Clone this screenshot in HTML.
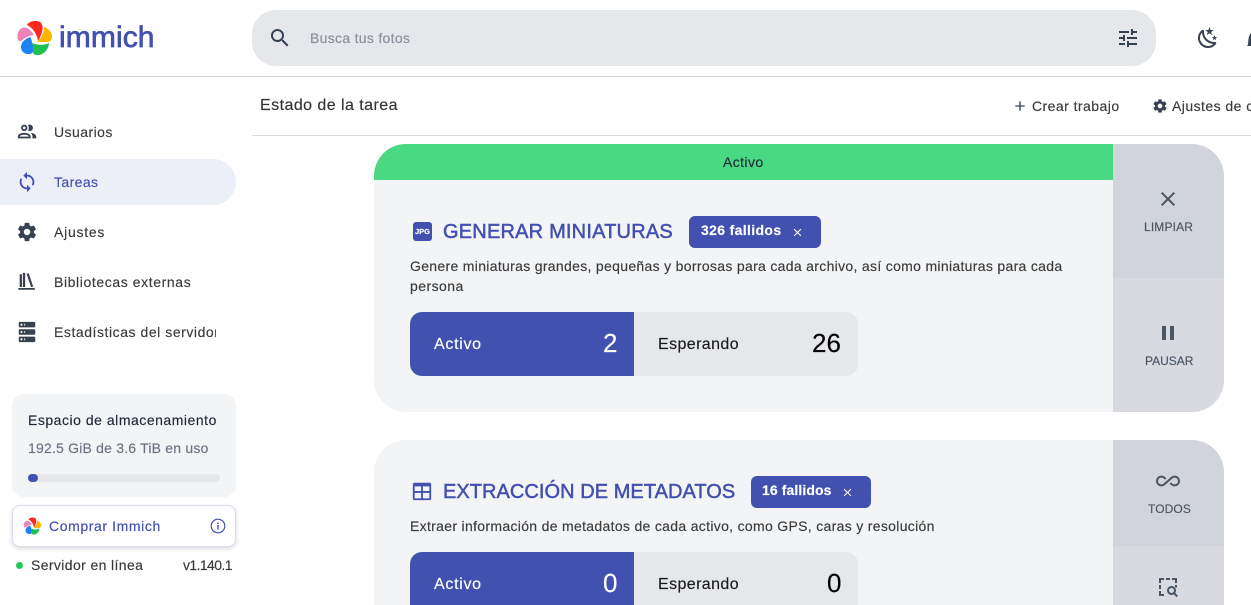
<!DOCTYPE html>
<html lang="es"><head><meta charset="utf-8"><title>Immich</title>
<style>
html,body{margin:0;padding:0;width:1251px;height:605px;overflow:hidden;background:#fff;font-family:"Liberation Sans",sans-serif;color:#3a3a3a}
#r{position:relative;width:1251px;height:605px;overflow:hidden;background:#fff}
.a{position:absolute}
.t{position:absolute;white-space:nowrap;line-height:20px;font-size:14px;-webkit-text-stroke:.15px currentColor}
svg{position:absolute;display:block}
</style></head><body><div id="r">
<!-- header -->
<svg style="left:16px;top:20px" width="36" height="36" viewBox="0 0 36 36">
<path d="M11 5C13 1 20 0 24 2C27 4 27 8 26 12C25 15 24 18 22 21C21 14 17 8 11 5Z" fill="#fa2921"/>
<path d="M28 7C32 8 36 12 36 17C36 20 34 22 31 22L21 22C25 19 28 13 28 7Z" fill="#ffb400"/>
<path d="M33 23C33 28 29 34 23 35C20 35.500 17 34.500 17 32L16 23C22 25.500 28 25.500 33 23Z" fill="#1ec050"/>
<path d="M14.500 17C8 19 5 23 5 27C5 31 8 34 12 34C14 34 17 34 17 31C17 26 16 21 14.500 17Z" fill="#1e83f7"/>
<path d="M1.500 17C1 12 4 8 8 7.500C12 7 16 12 18 15C13 15.500 9 18 5 21C3 21.500 1.500 20 1.500 17Z" fill="#ee83b8"/>
</svg>
<div class="t" style="left:59px;top:19px;font-size:30px;line-height:38px;color:#4250af;letter-spacing:.1px;-webkit-text-stroke:.7px #4250af">immich</div>
<div class="a" style="left:0;top:76px;width:1251px;height:1px;background:#d4d4de"></div>
<div class="a" style="left:252px;top:10px;width:904px;height:56px;border-radius:24px;background:#e5e7eb"></div>
<svg style="left:268px;top:26px" width="24" height="24" viewBox="0 0 24 24"><path fill="#374151" d="M9.5,3A6.5,6.5 0 0,1 16,9.5C16,11.11 15.41,12.59 14.44,13.73L14.71,14H15.5L20.5,19L19,20.5L14,15.5V14.71L13.73,14.44C12.59,15.41 11.11,16 9.5,16A6.5,6.5 0 0,1 3,9.5A6.5,6.5 0 0,1 9.5,3M9.5,5C7,5 5,7 5,9.5C5,12 7,14 9.5,14C12,14 14,12 14,9.5C14,7 12,5 9.5,5Z"/></svg>
<div class="t" style="left:310px;top:28px;color:#8a8f99;letter-spacing:.3px">Busca tus fotos</div>
<svg style="left:1116px;top:26px" width="24" height="24" viewBox="0 0 24 24"><path fill="#374151" d="M3,17V19H9V17H3M3,5V7H13V5H3M13,21V19H21V17H13V15H11V21H13M7,9V11H3V13H7V15H9V9H7M21,13V11H11V13H21M15,9H17V7H21V5H17V3H15V9Z"/></svg>
<svg style="left:1196px;top:26px" width="24" height="24" viewBox="0 0 24 24"><path fill="#374151" d="M17.75,4.09L15.22,6.03L16.13,9.09L13.5,7.28L10.87,9.09L11.78,6.03L9.25,4.09L12.44,4L13.5,1L14.56,4L17.75,4.09M21.25,11L19.61,12.25L20.2,14.23L18.5,13.06L16.8,14.23L17.39,12.25L15.75,11L17.81,10.95L18.5,9L19.19,10.95L21.25,11M18.97,15.95C19.8,15.87 20.69,17.05 20.16,17.8C19.84,18.25 19.5,18.67 19.08,19.07C15.17,23 8.84,23 4.94,19.07C1.03,15.17 1.03,8.83 4.94,4.93C5.34,4.53 5.76,4.17 6.21,3.85C6.96,3.32 8.14,4.21 8.06,5.04C7.79,7.9 8.75,10.87 10.95,13.06C13.14,15.26 16.1,16.22 18.97,15.95M17.33,17.97C14.5,17.81 11.7,16.64 9.53,14.5C7.36,12.31 6.2,9.5 6.04,6.68C3.23,9.82 3.34,14.64 6.35,17.66C9.37,20.67 14.19,20.78 17.33,17.97Z"/></svg>
<svg style="left:1247px;top:32px" width="4" height="14" viewBox="0 0 4 14"><path fill="#374151" d="M0 14L1 12.500L1.500 7Q2 3 4 1V14Z"/></svg>

<!-- sidebar -->
<div class="a" style="left:0;top:159px;width:236px;height:46px;background:#eceef8;border-radius:0 23px 23px 0"></div>
<svg style="left:16px;top:121px" width="22" height="22" viewBox="0 0 24 24"><path fill="#374151" d="M13.07 10.41A5 5 0 0 0 13.07 4.59A3.39 3.39 0 0 1 15 4A3.5 3.5 0 0 1 15 11A3.39 3.39 0 0 1 13.07 10.41M5.5 7.5A3.5 3.5 0 1 1 9 11A3.5 3.5 0 0 1 5.5 7.5M7.5 7.5A1.5 1.5 0 1 0 9 6A1.5 1.5 0 0 0 7.5 7.5M16 17V19H2V17S2 13 9 13 16 17 16 17M14 17C13.86 16.22 12.67 15 9 15S4.07 16.29 4 17M15.95 13A5.32 5.32 0 0 1 18 17V19H22V17S22 13.37 15.94 13Z"/></svg>
<svg style="left:16px;top:171px" width="22" height="22" viewBox="0 0 24 24"><path fill="#4250af" d="M12,18A6,6 0 0,1 6,12C6,11 6.25,10.03 6.7,9.2L5.24,7.74C4.46,8.97 4,10.43 4,12A8,8 0 0,0 12,20V23L16,19L12,15M12,4V1L8,5L12,9V6A6,6 0 0,1 18,12C18,13 17.75,13.97 17.3,14.8L18.76,16.26C19.54,15.03 20,13.57 20,12A8,8 0 0,0 12,4Z"/></svg>
<svg style="left:16px;top:221px" width="22" height="22" viewBox="0 0 24 24"><path fill="#374151" d="M12,15.5A3.5,3.5 0 0,1 8.5,12A3.5,3.5 0 0,1 12,8.5A3.5,3.5 0 0,1 15.5,12A3.5,3.5 0 0,1 12,15.5M19.43,12.97C19.47,12.65 19.5,12.33 19.5,12C19.5,11.67 19.47,11.34 19.43,11L21.54,9.37C21.73,9.22 21.78,8.95 21.66,8.73L19.66,5.27C19.54,5.05 19.27,4.96 19.05,5.05L16.56,6.05C16.04,5.66 15.5,5.32 14.87,5.07L14.5,2.42C14.46,2.18 14.25,2 14,2H10C9.75,2 9.54,2.18 9.5,2.42L9.13,5.07C8.5,5.32 7.96,5.66 7.44,6.05L4.95,5.05C4.73,4.96 4.46,5.05 4.34,5.27L2.34,8.73C2.21,8.95 2.27,9.22 2.46,9.37L4.57,11C4.53,11.34 4.5,11.67 4.5,12C4.5,12.33 4.53,12.65 4.57,12.97L2.46,14.63C2.27,14.78 2.21,15.05 2.34,15.27L4.34,18.73C4.46,18.95 4.73,19.03 4.95,18.95L7.44,17.94C7.96,18.34 8.5,18.68 9.13,18.93L9.5,21.58C9.54,21.82 9.75,22 10,22H14C14.25,22 14.46,21.82 14.5,21.58L14.87,18.93C15.5,18.67 16.04,18.34 16.56,17.94L19.05,18.95C19.27,19.03 19.54,18.95 19.66,18.73L21.66,15.27C21.78,15.05 21.73,14.78 21.54,14.63L19.43,12.97Z"/></svg>
<svg style="left:16px;top:271px" width="22" height="22" viewBox="0 0 24 24"><path fill="#374151" d="M4 3.500H6.500V17.500H4ZM7.500 2H10V17.500H7.500ZM11.500 3.200L13.800 2.500L18.800 17L16.400 17.500ZM2.500 18.500H20.500V20.500H2.500Z"/></svg>
<svg style="left:16px;top:321px" width="22" height="22" viewBox="0 0 24 24"><path fill="#374151" d="M4,1H20A1,1 0 0,1 21,2V6A1,1 0 0,1 20,7H4A1,1 0 0,1 3,6V2A1,1 0 0,1 4,1M4,9H20A1,1 0 0,1 21,10V14A1,1 0 0,1 20,15H4A1,1 0 0,1 3,14V10A1,1 0 0,1 4,9M4,17H20A1,1 0 0,1 21,18V22A1,1 0 0,1 20,23H4A1,1 0 0,1 3,22V18A1,1 0 0,1 4,17M9,5H10V3H9V5M9,13H10V11H9V13M9,21H10V19H9V21M5,3V5H7V3H5M5,11V13H7V11H5M5,19V21H7V19H5Z"/></svg>
<div class="t" style="left:54px;top:122px;letter-spacing:.45px">Usuarios</div>
<div class="t" style="left:54px;top:172px;color:#4250af;letter-spacing:.4px">Tareas</div>
<div class="t" style="left:54px;top:222px;letter-spacing:.75px">Ajustes</div>
<div class="t" style="left:54px;top:272px;letter-spacing:.6px">Bibliotecas externas</div>
<div class="a" style="left:54px;top:322px;width:162px;height:20px;overflow:hidden"><div class="t" style="left:0;top:0;letter-spacing:.55px">Estadísticas del servidor</div></div>

<div class="a" style="left:12px;top:394px;width:224px;height:103px;border-radius:12px;background:#f3f4f6"></div>
<div class="t" style="left:28px;top:410px;color:#1f2937;letter-spacing:.52px">Espacio de almacenamiento</div>
<div class="t" style="left:28px;top:438px;color:#6b7280;letter-spacing:.2px">192.5 GiB de 3.6 TiB en uso</div>
<div class="a" style="left:28px;top:474px;width:192px;height:7.500px;border-radius:4px;background:#e5e7eb"></div>
<div class="a" style="left:28px;top:474px;width:10px;height:7.500px;border-radius:4px;background:#4250af"></div>
<div class="a" style="left:12px;top:505px;width:222px;height:40px;border:1px solid #d9dbf0;border-radius:8px;background:#fff;box-shadow:0 2px 4px rgba(60,60,90,.18)"></div>
<svg style="left:23px;top:517px" width="18" height="18" viewBox="0 0 36 36">
<path d="M11 5C13 1 20 0 24 2C27 4 27 8 26 12C25 15 24 18 22 21C21 14 17 8 11 5Z" fill="#fa2921"/>
<path d="M28 7C32 8 36 12 36 17C36 20 34 22 31 22L21 22C25 19 28 13 28 7Z" fill="#ffb400"/>
<path d="M33 23C33 28 29 34 23 35C20 35.500 17 34.500 17 32L16 23C22 25.500 28 25.500 33 23Z" fill="#1ec050"/>
<path d="M14.500 17C8 19 5 23 5 27C5 31 8 34 12 34C14 34 17 34 17 31C17 26 16 21 14.500 17Z" fill="#1e83f7"/>
<path d="M1.500 17C1 12 4 8 8 7.500C12 7 16 12 18 15C13 15.500 9 18 5 21C3 21.500 1.500 20 1.500 17Z" fill="#ee83b8"/>
</svg>
<div class="t" style="left:49px;top:516px;color:#4250af;letter-spacing:.6px">Comprar Immich</div>
<svg style="left:210px;top:518px" width="16" height="16" viewBox="0 0 16 16"><circle cx="8" cy="8" r="6.800" fill="none" stroke="#4250af" stroke-width="1.200"/><rect x="7.300" y="7" width="1.400" height="4.500" fill="#4250af"/><rect x="7.300" y="4.500" width="1.400" height="1.500" fill="#4250af"/></svg>
<div class="a" style="left:16px;top:562px;width:7px;height:7px;border-radius:50%;background:#22c55e"></div>
<div class="t" style="left:31px;top:555px;letter-spacing:.38px">Servidor en línea</div>
<div class="t" style="left:183px;top:555px;letter-spacing:-.6px">v1.140.1</div>

<!-- top bar of content -->
<div class="t" style="left:260px;top:96px;font-size:16px;letter-spacing:.45px;color:#333">Estado de la tarea</div>
<div class="a" style="left:252px;top:135px;width:999px;height:1px;background:#d9d9e0"></div>
<svg style="left:1012px;top:98px" width="16" height="16" viewBox="0 0 24 24"><path fill="#374151" d="M19,13H13V19H11V13H5V11H11V5H13V11H19V13Z"/></svg>
<div class="t" style="left:1032px;top:96px;letter-spacing:.45px">Crear trabajo</div>
<svg style="left:1152px;top:98px" width="16" height="16" viewBox="0 0 24 24"><path fill="#374151" d="M12,15.5A3.5,3.5 0 0,1 8.5,12A3.5,3.5 0 0,1 12,8.5A3.5,3.5 0 0,1 15.5,12A3.5,3.5 0 0,1 12,15.5M19.43,12.97C19.47,12.65 19.5,12.33 19.5,12C19.5,11.67 19.47,11.34 19.43,11L21.54,9.37C21.73,9.22 21.78,8.95 21.66,8.73L19.66,5.27C19.54,5.05 19.27,4.96 19.05,5.05L16.56,6.05C16.04,5.66 15.5,5.32 14.87,5.07L14.5,2.42C14.46,2.18 14.25,2 14,2H10C9.75,2 9.54,2.18 9.5,2.42L9.13,5.07C8.5,5.32 7.96,5.66 7.44,6.05L4.95,5.05C4.73,4.96 4.46,5.05 4.34,5.27L2.34,8.73C2.21,8.95 2.27,9.22 2.46,9.37L4.57,11C4.53,11.34 4.5,11.67 4.5,12C4.5,12.33 4.53,12.65 4.57,12.97L2.46,14.63C2.27,14.78 2.21,15.05 2.34,15.27L4.34,18.73C4.46,18.95 4.73,19.03 4.95,18.95L7.44,17.94C7.96,18.34 8.5,18.68 9.13,18.93L9.5,21.58C9.54,21.82 9.75,22 10,22H14C14.25,22 14.46,21.82 14.5,21.58L14.87,18.93C15.5,18.67 16.04,18.34 16.56,17.94L19.05,18.95C19.27,19.03 19.54,18.95 19.66,18.73L21.66,15.27C21.78,15.05 21.73,14.78 21.54,14.63L19.43,12.97Z"/></svg>
<div class="a" style="left:1172px;top:96px;width:79px;height:20px;overflow:hidden"><div class="t" style="left:0;top:0;letter-spacing:.45px">Ajustes de cola</div></div>

<!-- card 1 -->
<div class="a" style="left:374px;top:144px;width:850px;height:268px;border-radius:32px;background:#f3f4f6;overflow:hidden">
  <div class="a" style="left:0;top:0;width:739px;height:36px;background:#48d982"></div>
  <div class="a" style="left:739px;top:0;width:111px;height:134px;background:#d1d5db"></div>
  <div class="a" style="left:739px;top:134px;width:111px;height:134px;background:#d8dae0"></div>
</div>
<div class="t" style="left:723px;top:152px;color:#1f2937;letter-spacing:.4px">Activo</div>
<svg style="left:1156px;top:187px" width="24" height="24" viewBox="0 0 24 24"><path fill="#4b5563" d="M19,6.41L17.59,5L12,10.59L6.41,5L5,6.41L10.59,12L5,17.59L6.41,19L12,13.41L17.59,19L19,17.59L13.41,12L19,6.41Z"/></svg>
<div class="t" style="left:1144px;top:217px;font-size:12px;color:#4b5563;letter-spacing:.15px">LIMPIAR</div>
<svg style="left:1156px;top:321px" width="24" height="24" viewBox="0 0 24 24"><path fill="#4b5563" d="M14,19H18V5H14M6,19H10V5H6V19Z"/></svg>
<div class="t" style="left:1145px;top:351px;font-size:12px;color:#4b5563">PAUSAR</div>

<div class="a" style="left:413px;top:222px;width:19px;height:19px;border-radius:3px;background:#4250af"></div>
<div class="t" style="left:413px;top:222px;width:19px;text-align:center;line-height:19px;font-size:7.500px;font-weight:700;color:#fff">JPG</div>
<div class="t" style="left:443px;top:219px;font-size:20px;line-height:26px;color:#4250af;letter-spacing:.2px;-webkit-text-stroke:.5px #4250af">GENERAR MINIATURAS</div>
<div class="a" style="left:689px;top:216px;width:132px;height:32px;border-radius:6px;background:#4250af"></div>
<div class="t" style="left:701px;top:220px;font-weight:700;color:#fff;letter-spacing:.35px">326 fallidos</div>
<svg style="left:791px;top:226px" width="13" height="13" viewBox="0 0 24 24"><path fill="#fff" d="M19,6.41L17.59,5L12,10.59L6.41,5L5,6.41L10.59,12L5,17.59L6.41,19L12,13.41L17.59,19L19,17.59L13.41,12L19,6.41Z"/></svg>
<div class="t" style="left:410px;top:256px;letter-spacing:.315px">Genere miniaturas grandes, pequeñas y borrosas para cada archivo, así como miniaturas para cada</div>
<div class="t" style="left:410px;top:276px;letter-spacing:.45px">persona</div>
<div class="a" style="left:410px;top:312px;width:224px;height:64px;background:#4250af;border-radius:12px 0 0 12px"></div>
<div class="a" style="left:634px;top:312px;width:224px;height:64px;background:#e5e7eb;border-radius:0 12px 12px 0"></div>
<div class="t" style="left:434px;top:335px;font-size:16px;color:#fff;letter-spacing:.7px">Activo</div>
<div class="t" style="left:603px;top:329px;font-size:26px;line-height:28px;color:#fff">2</div>
<div class="t" style="left:658px;top:335px;font-size:16px;color:#1a1a1a;letter-spacing:.4px">Esperando</div>
<div class="t" style="left:812px;top:329px;font-size:26px;line-height:28px;color:#000">26</div>

<!-- card 2 (cut by the viewport) -->
<div class="a" style="left:374px;top:440px;width:850px;height:165px;border-radius:32px 32px 0 0;background:#f3f4f6;overflow:hidden">
  <div class="a" style="left:739px;top:0;width:111px;height:106px;background:#d1d5db"></div>
  <div class="a" style="left:739px;top:106px;width:111px;height:59px;background:#d8dae0"></div>
</div>
<svg style="left:1156px;top:469px" width="24" height="24" viewBox="0 0 24 24"><path fill="#4b5563" d="M18.6,6.62C17.16,6.62 15.8,7.18 14.83,8.15L7.8,14.39C7.16,15.03 6.31,15.38 5.4,15.38C3.53,15.38 2,13.87 2,12C2,10.13 3.53,8.62 5.4,8.62C6.31,8.62 7.16,8.97 7.84,9.65L8.97,10.65L10.5,9.31L9.22,8.2C8.2,7.18 6.84,6.62 5.4,6.62C2.42,6.62 0,9.04 0,12C0,14.96 2.42,17.38 5.4,17.38C6.84,17.38 8.2,16.82 9.17,15.85L16.2,9.61C16.84,8.97 17.69,8.62 18.6,8.62C20.47,8.62 22,10.13 22,12C22,13.87 20.47,15.38 18.6,15.38C17.7,15.38 16.84,15.03 16.16,14.35L15,13.34L13.5,14.68L14.78,15.8C15.8,16.81 17.15,17.37 18.6,17.37C21.58,17.37 24,14.96 24,12C24,9 21.58,6.62 18.6,6.62Z"/></svg>
<div class="t" style="left:1148px;top:499px;font-size:12px;color:#4b5563;letter-spacing:.1px">TODOS</div>
<svg style="left:1156px;top:575px" width="24" height="24" viewBox="0 0 24 24"><path fill="#4b5563" d="M3 3H8V5H5V8H3ZM10 3H14V5H10ZM16 3H21V8H19V5H16ZM3 10H5V14H3ZM19 10H21V12.500H19ZM3 16H5V19H8V21H3ZM15.500 11A4.500 4.500 0 0 1 19.200 18L22 20.800L20.600 22.200L17.800 19.400A4.500 4.500 0 1 1 15.500 11ZM15.500 13A2.500 2.500 0 1 0 15.500 18A2.500 2.500 0 0 0 15.500 13Z"/></svg>

<svg style="left:411px;top:480px" width="22" height="22" viewBox="0 0 24 24"><path fill="#4250af" d="M4,3H20A2,2 0 0,1 22,5V20A2,2 0 0,1 20,22H4A2,2 0 0,1 2,20V5A2,2 0 0,1 4,3M4,7V12H11V7H4M13,7V12H20V7H13M4,14V20H11V14H4M13,14V20H20V14H13Z"/></svg>
<div class="t" style="left:443px;top:479px;font-size:20px;line-height:26px;color:#4250af;letter-spacing:.05px;-webkit-text-stroke:.5px #4250af">EXTRACCIÓN DE METADATOS</div>
<div class="a" style="left:751px;top:476px;width:120px;height:32px;border-radius:6px;background:#4250af"></div>
<div class="t" style="left:762px;top:480px;font-weight:700;color:#fff;letter-spacing:.1px">16 fallidos</div>
<svg style="left:841px;top:486px" width="13" height="13" viewBox="0 0 24 24"><path fill="#fff" d="M19,6.41L17.59,5L12,10.59L6.41,5L5,6.41L10.59,12L5,17.59L6.41,19L12,13.41L17.59,19L19,17.59L13.41,12L19,6.41Z"/></svg>
<div class="t" style="left:410px;top:516px;letter-spacing:.317px">Extraer información de metadatos de cada activo, como GPS, caras y resolución</div>
<div class="a" style="left:410px;top:552px;width:224px;height:53px;background:#4250af;border-radius:12px 0 0 0"></div>
<div class="a" style="left:634px;top:552px;width:224px;height:53px;background:#e5e7eb;border-radius:0 12px 0 0"></div>
<div class="t" style="left:434px;top:575px;font-size:16px;color:#fff;letter-spacing:.7px">Activo</div>
<div class="t" style="left:603px;top:569px;font-size:26px;line-height:28px;color:#fff">0</div>
<div class="t" style="left:658px;top:575px;font-size:16px;color:#1a1a1a;letter-spacing:.4px">Esperando</div>
<div class="t" style="left:827px;top:569px;font-size:26px;line-height:28px;color:#000">0</div>
</div></body></html>
